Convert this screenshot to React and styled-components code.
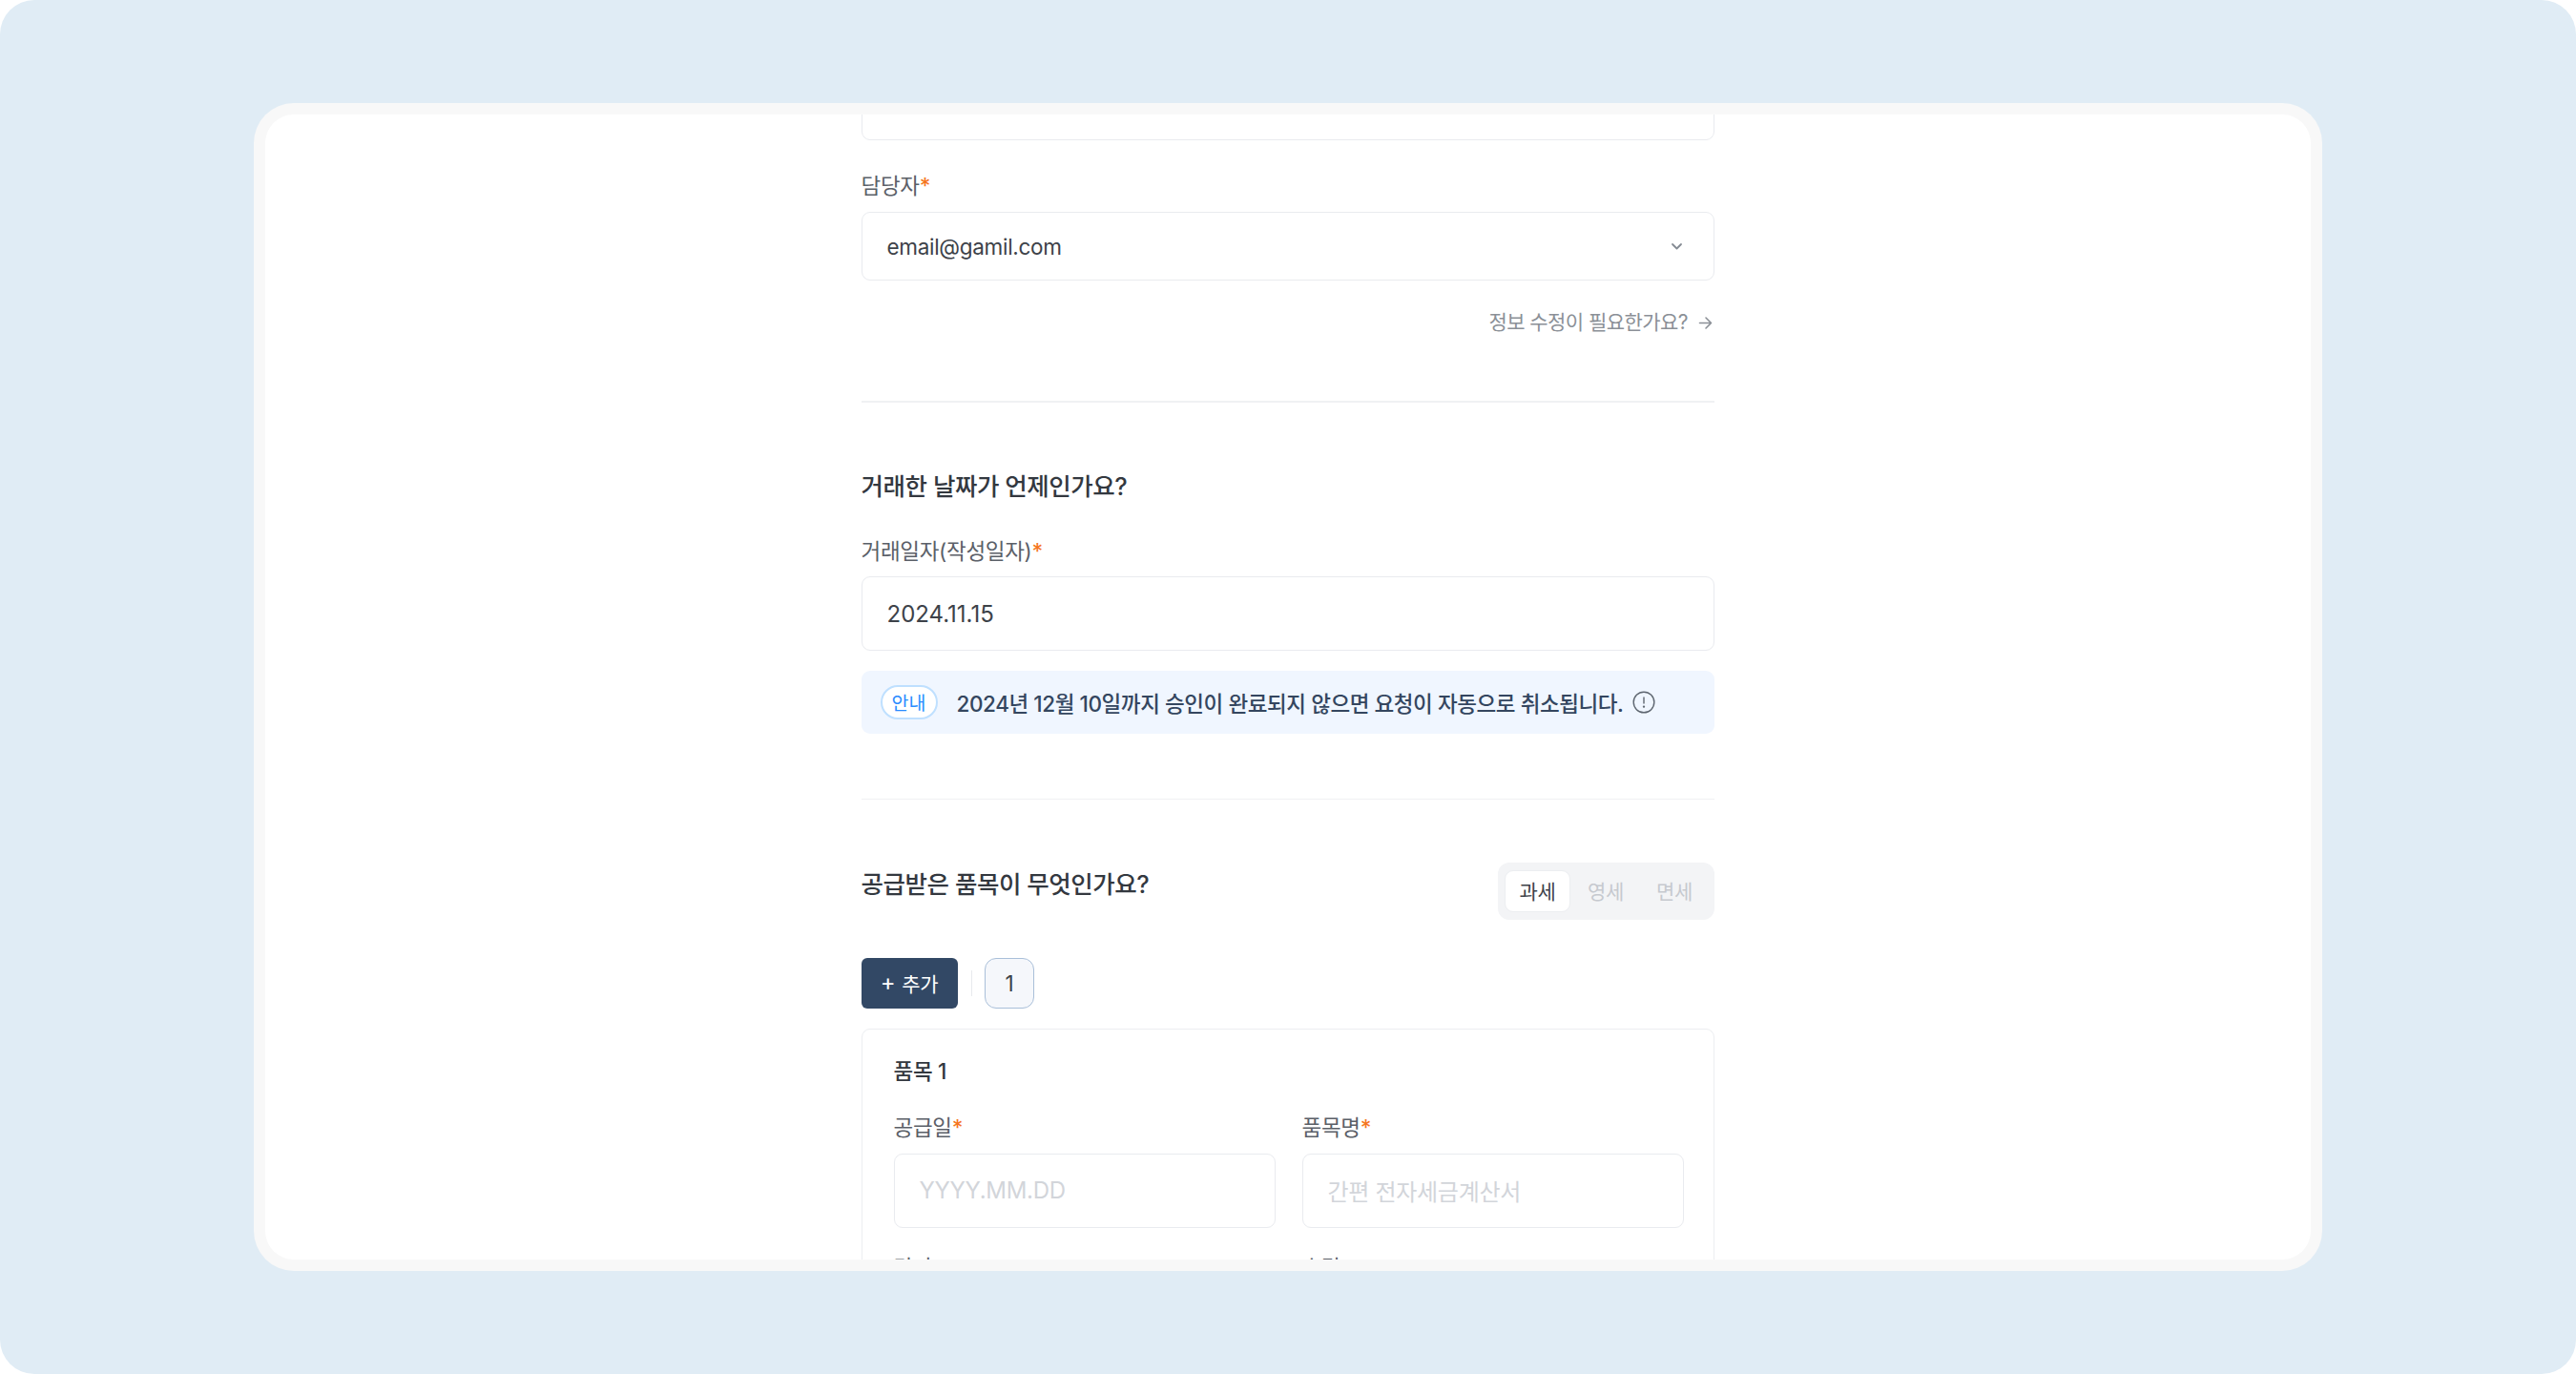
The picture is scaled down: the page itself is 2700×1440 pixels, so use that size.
import React from "react";
import styled, { createGlobalStyle } from "styled-components";

const Global = createGlobalStyle`
  html, body { margin: 0; padding: 0; background: #fff; }
  * { box-sizing: border-box; }
  body { font-family: "Inter", "Noto Sans CJK KR", "Noto Sans", sans-serif; }
`;
const Stage = styled.div`
  width: 2700px; height: 1440px; background: #e0ecf5; border-radius: 36px;
  padding: 108px 266px;
`;
const Frame = styled.div`
  height: 100%; padding: 12px; background: #f8f8f8; border-radius: 42px;
`;
const Sheet = styled.div`
  height: 100%; background: #fff; border-radius: 30px; overflow: hidden;
`;
const Form = styled.div`
  width: 894.5px; margin: -45px 0 0 624.5px; display: flex; flex-direction: column;
`;
const Label = styled.label`
  display: block; font-size: 22.5px; line-height: 30px; color: #5b6068; letter-spacing: -0.3px;
  margin-top: ${p => p.$mt ?? 0}px; margin-bottom: ${p => p.$mb ?? 12}px;
  & > b { color: #f5761f; font-weight: 500; }
`;
const Box = styled.div`
  display: flex; align-items: center; justify-content: space-between;
  height: ${p => p.$h}px; padding: ${p => p.$pt ?? 0}px ${p => p.$pr ?? 25}px 0 26px; flex: none;
  border: 1.5px solid #e9ebef; border-radius: 9px; background: #fff;
  color: #3d4249; font-size: ${p => p.$fs ?? 24}px; letter-spacing: ${p => p.$ls ?? 0}px;
`;
const Hint = styled.span` color: #d2d5da; letter-spacing: -0.3px; margin-bottom: 2px; `;
const More = styled.div`
  margin-top: 29px; padding-right: 2px; align-self: flex-end; display: flex; align-items: center; gap: 11px;
  font-size: 21px; line-height: 30px; color: #8b9097; letter-spacing: -0.55px;
`;
const Rule = styled.hr`
  border: 0; height: 1.5px; background: #f0f1f3; width: 100%; margin: ${p => p.$t}px 0 ${p => p.$b}px;
`;
const Heading = styled.h2`
  margin: 0; padding-top: ${p => p.$pt ?? 0}px; font-size: 25.5px; line-height: 36px; font-weight: 500; color: #33383f; letter-spacing: -0.45px;
`;
const Notice = styled.div`
  margin-top: 21px; height: 66px; background: #f0f6ff; border-radius: 9px; padding: 0 20px;
  display: flex; align-items: center; gap: 20px; font-size: 22.5px; font-weight: 500; color: #34465f; letter-spacing: -0.42px;
`;
const Badge = styled.span`
  width: 60px; height: 36px; border-radius: 18px; border: 2px solid #bfe0ff; background: #fff;
  display: flex; align-items: center; justify-content: center; color: #2a8cff; font-size: 19.5px; font-weight: 400; letter-spacing: 0;
`;
const InfoSlot = styled.span`
  display: flex; margin-left: -10px;
`;
const Row = styled.div`
  display: flex; justify-content: space-between; align-items: flex-start;
`;
const Segment = styled.div`
  display: flex; padding: 8px 7px; height: 60px; background: #f3f4f6; border-radius: 12px; gap: 2px;
`;
const SegItem = styled.span`
  width: ${p => p.$active ? 69 : 70}px; height: 44px; padding-bottom: 2px; display: flex; align-items: center; justify-content: center;
  font-size: 21px; border-radius: 9px; color: ${p => p.$active ? "#3d4249" : "#c6c9cf"};
  background: ${p => p.$active ? "#fff" : "transparent"};
  border: ${p => p.$active ? "1.5px solid #eceef1" : "none"};
  letter-spacing: -0.3px;
`;
const Tools = styled.div`
  margin-top: 40px; display: flex; align-items: center; height: 53px;
`;
const AddButton = styled.button`
  width: 101px; height: 53px; padding: 0 0 2px; background: #324865; color: #fff; border: 0; border-radius: 6px;
  font: inherit; font-size: 21px; letter-spacing: -0.3px; display: flex; align-items: center; justify-content: center; gap: 7px;
`;
const Plus = styled.span` font-size: 24px; line-height: 1; `;
const VLine = styled.span`
  width: 1.5px; height: 27px; background: #e8eaed; margin: 0 13px 0 14px;
`;
const Chip = styled.span`
  width: 52px; height: 53px; background: #f5f7fb; border: 1.5px solid #a9bfd9; border-radius: 12px;
  display: flex; align-items: center; justify-content: center; color: #3d4249; font-size: 22.5px;
`;
const Card = styled.div`
  margin-top: 21px; border: 1.5px solid #eceef1; border-radius: 9px; padding: 29px 32px 30px 33px;
`;
const CardTitle = styled.div`
  font-size: 22.5px; line-height: 30px; font-weight: 500; color: #33383f; letter-spacing: -0.3px; margin-bottom: 29px;
`;
const Grid = styled.div`
  display: grid; grid-template-columns: 400px 400px; column-gap: 28px; row-gap: 27px;
`;

const Chevron = () => (
  <svg width="15" height="15" viewBox="0 0 15 15" fill="none" stroke="#858b93" strokeWidth="1.8" strokeLinecap="round" strokeLinejoin="round">
    <path d="M3 5 7.5 9.5 12 5" />
  </svg>
);
const Arrow = () => (
  <svg width="15" height="15" viewBox="0 0 15 15" fill="none" stroke="#8b9097" strokeWidth="1.6" strokeLinecap="round" strokeLinejoin="round">
    <path d="M1.5 7.5h12M8 2l5.5 5.5L8 13" />
  </svg>
);
const Info = () => (
  <svg width="24" height="24" viewBox="0 0 24 24" fill="none" stroke="#5e6670" strokeWidth="1.4" strokeLinecap="round">
    <circle cx="12" cy="12" r="10.8" />
    <path d="M12 7v6" />
    <circle cx="12" cy="16.6" r=".5" fill="#5e6670" />
  </svg>
);
const Req = () => <b>*</b>;

export default function App() {
  return (
    <>
      <Global />
      <Stage>
        <Frame>
          <Sheet>
            <Form>
              <Box $h={72} />
              <Label $mt={33}>담당자<Req /></Label>
              <Box $h={72} $fs={22.5} $pr={31} $ls={-0.3}>email@gamil.com<Chevron /></Box>
              <More>정보 수정이 필요한가요? <Arrow /></More>
              <Rule $t={67} $b={70} />
              <Heading>거래한 날짜가 언제인가요?</Heading>
              <Label $mt={35} $mb={11}>거래일자(작성일자)<Req /></Label>
              <Box $h={78} $pt={2}>2024.11.15</Box>
              <Notice>
                <Badge>안내</Badge>
                <span>2024년 12월 10일까지 승인이 완료되지 않으면 요청이 자동으로 취소됩니다.</span>
                <InfoSlot><Info /></InfoSlot>
              </Notice>
              <Rule $t={68} $b={66} />
              <Row>
                <Heading $pt={5}>공급받은 품목이 무엇인가요?</Heading>
                <Segment>
                  <SegItem $active>과세</SegItem>
                  <SegItem>영세</SegItem>
                  <SegItem>면세</SegItem>
                </Segment>
              </Row>
              <Tools>
                <AddButton><Plus>+</Plus>추가</AddButton>
                <VLine />
                <Chip>1</Chip>
              </Tools>
              <Card>
                <CardTitle>품목 1</CardTitle>
                <Grid>
                  <div>
                    <Label>공급일<Req /></Label>
                    <Box $h={78}><Hint>YYYY.MM.DD</Hint></Box>
                  </div>
                  <div>
                    <Label>품목명<Req /></Label>
                    <Box $h={78}><Hint>간편 전자세금계산서</Hint></Box>
                  </div>
                  <div>
                    <Label>단가<Req /></Label>
                    <Box $h={78} />
                  </div>
                  <div>
                    <Label>수량</Label>
                    <Box $h={78} />
                  </div>
                </Grid>
              </Card>
            </Form>
          </Sheet>
        </Frame>
      </Stage>
    </>
  );
}
